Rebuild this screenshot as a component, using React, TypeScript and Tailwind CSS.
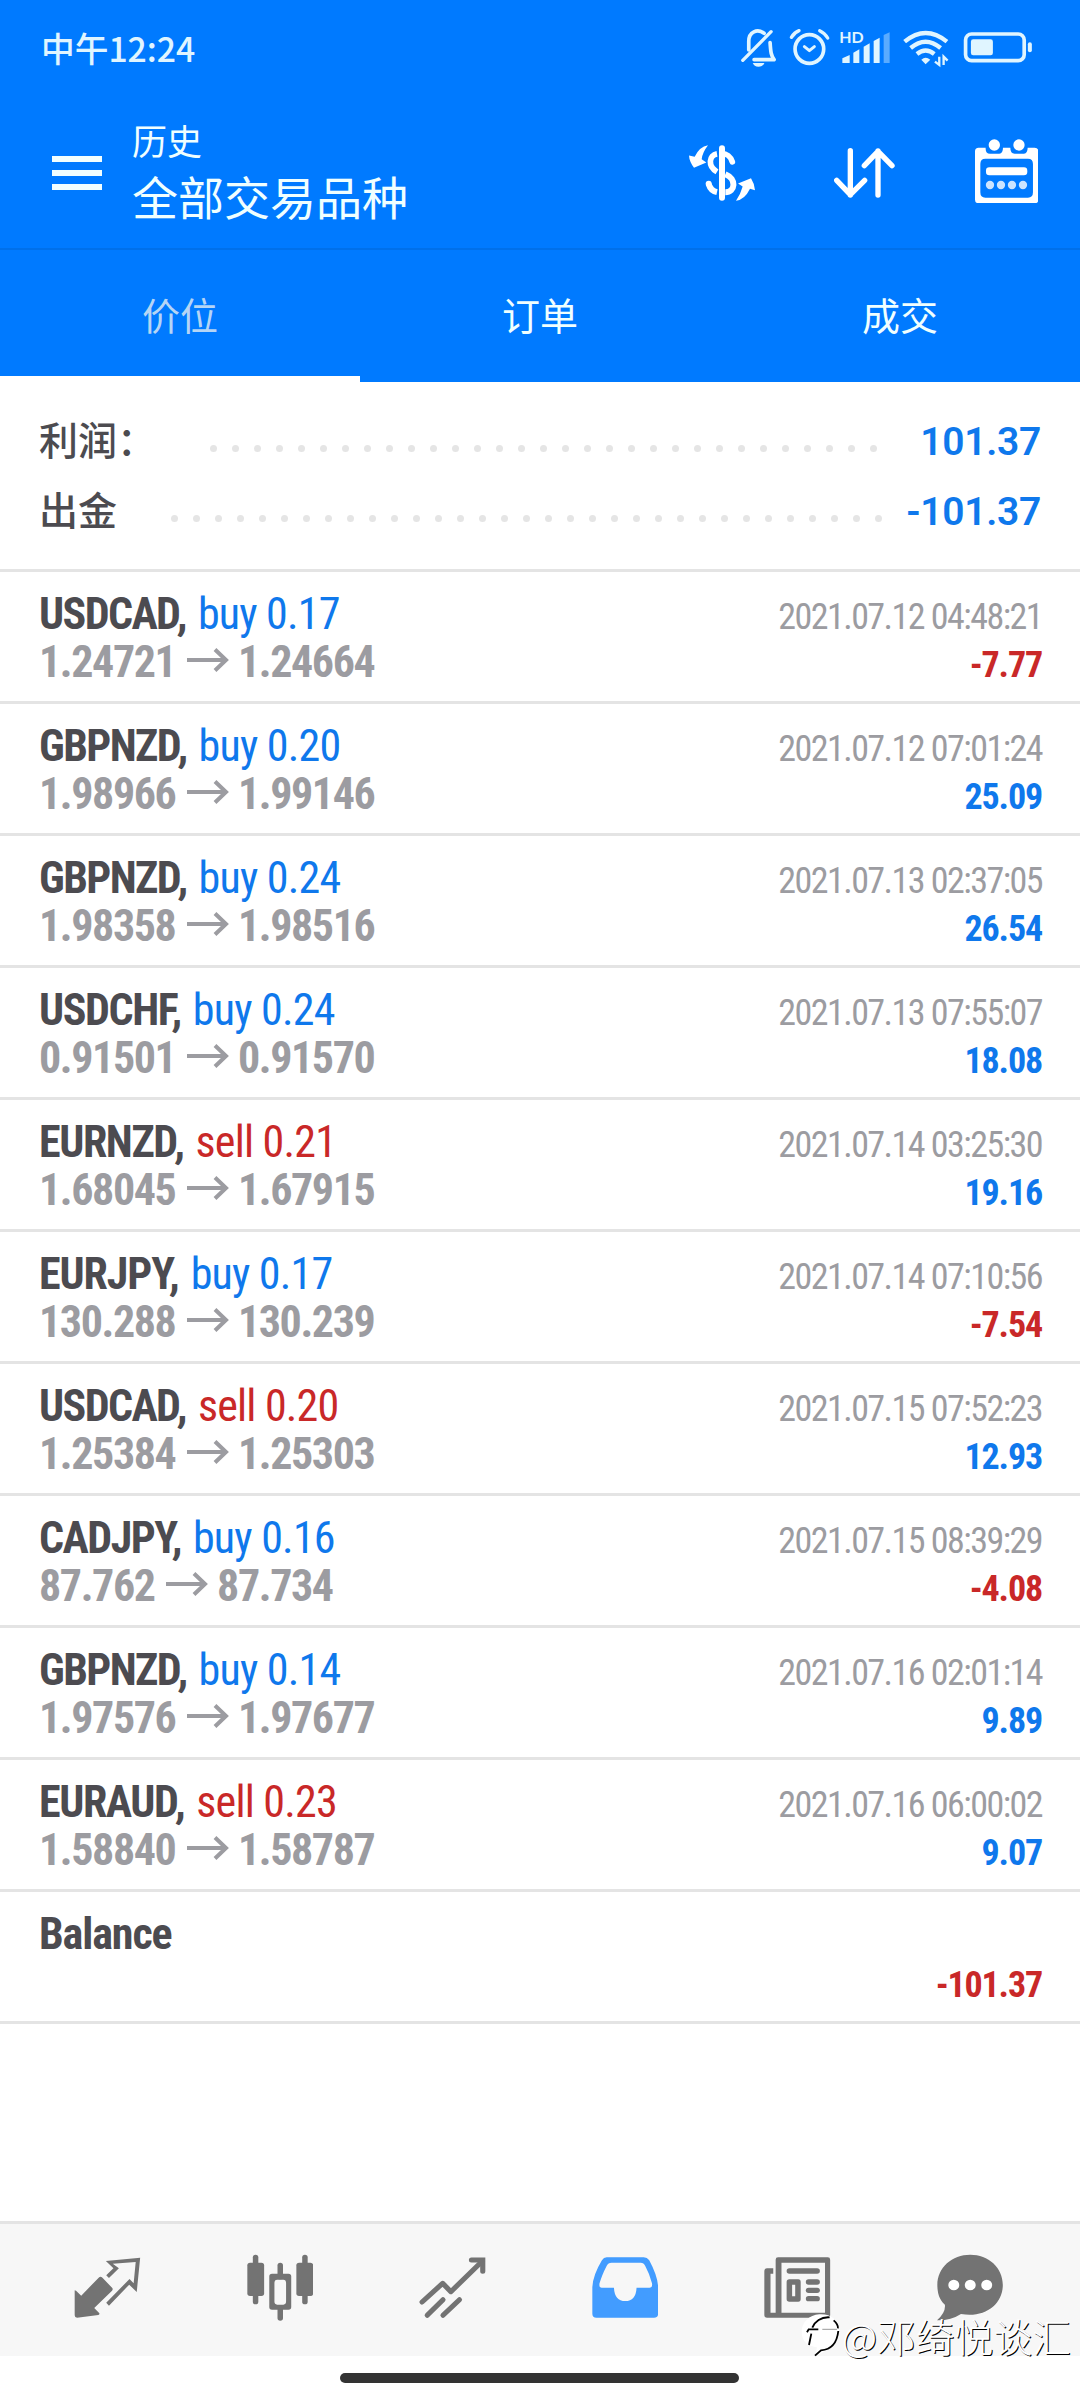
type Trade = {
  symbol: string;
  tracking: string;
  side: 'buy' | 'sell';
  lots: string;
  open: string;
  close: string;
  time: string;
  profit: string;
};

const trades: Trade[] = [
  { symbol: 'USDCAD', tracking: 'tracking-[-1.6px]', side: 'buy', lots: '0.17', open: '1.24721', close: '1.24664', time: '2021.07.12 04:48:21', profit: '-7.77' },
  { symbol: 'GBPNZD', tracking: 'tracking-[-1.6px]', side: 'buy', lots: '0.20', open: '1.98966', close: '1.99146', time: '2021.07.12 07:01:24', profit: '25.09' },
  { symbol: 'GBPNZD', tracking: 'tracking-[-1.6px]', side: 'buy', lots: '0.24', open: '1.98358', close: '1.98516', time: '2021.07.13 02:37:05', profit: '26.54' },
  { symbol: 'USDCHF', tracking: 'tracking-[-1.4px]', side: 'buy', lots: '0.24', open: '0.91501', close: '0.91570', time: '2021.07.13 07:55:07', profit: '18.08' },
  { symbol: 'EURNZD', tracking: 'tracking-[-1.4px]', side: 'sell', lots: '0.21', open: '1.68045', close: '1.67915', time: '2021.07.14 03:25:30', profit: '19.16' },
  { symbol: 'EURJPY', tracking: 'tracking-[-1.1px]', side: 'buy', lots: '0.17', open: '130.288', close: '130.239', time: '2021.07.14 07:10:56', profit: '-7.54' },
  { symbol: 'USDCAD', tracking: 'tracking-[-1.6px]', side: 'sell', lots: '0.20', open: '1.25384', close: '1.25303', time: '2021.07.15 07:52:23', profit: '12.93' },
  { symbol: 'CADJPY', tracking: 'tracking-[-1.5px]', side: 'buy', lots: '0.16', open: '87.762', close: '87.734', time: '2021.07.15 08:39:29', profit: '-4.08' },
  { symbol: 'GBPNZD', tracking: 'tracking-[-1.6px]', side: 'buy', lots: '0.14', open: '1.97576', close: '1.97677', time: '2021.07.16 02:01:14', profit: '9.89' },
  { symbol: 'EURAUD', tracking: 'tracking-[-1.4px]', side: 'sell', lots: '0.23', open: '1.58840', close: '1.58787', time: '2021.07.16 06:00:02', profit: '9.07' },
];

const CJK = "font-['Noto_Sans_CJK_SC',sans-serif]";

function StatusBar() {
  return (
    <div className="flex h-[96px] items-center justify-between pl-[41px] pr-[47px]">
      <span className="-mt-[1px] font-['Noto_Sans_CJK_SC',sans-serif] text-[33.7px] font-medium leading-none text-[#e0f5ff]">中午12:24</span>
      <svg viewBox="300 80 880 130" className="h-[43.3px] w-[293.3px] text-[#e0f5ff]" fill="none" stroke="currentColor" strokeLinecap="round" strokeLinejoin="round">
        {/* muted bell */}
        <path d="M372 102C352 87 326 97 326 126V152M390 130C392 160 393 168 402 181H342" strokeWidth="11" />
        <path d="M308 183L393 97" strokeWidth="10" />
        <path d="M338 191H373Q368 202 355 202T338 191Z" fill="currentColor" stroke="none" />
        {/* alarm clock */}
        <circle cx="508" cy="149" r="43" strokeWidth="11" />
        <path d="M493 142L508 154L523 142" strokeWidth="9" />
        <path d="M454 114Q463 99 477 94M539 94Q554 101 563 116" strokeWidth="10" />
        {/* signal */}
        <g fill="currentColor" stroke="none">
          <path d="M607 177L629 167V191H607ZM640 160L658 150V191H640ZM671 142L689 132V191H671ZM701 125L719 115V191H701Z" />
          <path d="M731 107L749 99V191H731Z" opacity="0.4" />
          <text x="598" y="131" fontSize="48" fontWeight="700" fontFamily="Lato, sans-serif" textLength="73">HD</text>
        </g>
        {/* wifi */}
        <path d="M794 127Q857 75 921 127M812 146Q857 108 902 146M831 164Q857 143 883 164" strokeWidth="13" strokeLinecap="butt" />
        <path d="M844 181Q857 169 871 181L857 195Z" fill="currentColor" stroke="none" />
        <path d="M898 172V197L885 187M911 197V172L923 184" strokeWidth="7" strokeLinecap="butt" strokeLinejoin="miter" />
        {/* battery */}
        <rect x="977" y="104" width="176" height="80" rx="18" strokeWidth="11" />
        <rect x="993" y="120" width="66" height="48" rx="7" fill="currentColor" stroke="none" />
        <rect x="1164" y="129" width="12" height="30" rx="6" fill="currentColor" stroke="none" />
      </svg>
    </div>
  );
}

function Header() {
  return (
    <header className="flex h-[152px] items-start">
      <button className="ml-[52px] mt-[60px] flex w-[50px] flex-col gap-2" aria-label="menu">
        <span className="h-[6px] bg-[#f2ffff]" />
        <span className="h-[6px] bg-[#f2ffff]" />
        <span className="h-[6px] bg-[#f2ffff]" />
      </button>
      <div className={`ml-[30px] mt-[19px] flex-1 text-[#f0ffff] ${CJK}`}>
        <div className="text-[35px] leading-[50px]">历史</div>
        <div className="text-[46px] leading-[60px]">全部交易品种</div>
      </div>
      <div className="mr-[2px] flex h-[152px] text-white">
        <div className="flex w-[142.5px] justify-center pt-[49px]">
          <svg viewBox="147 436 198 167" className="h-[56px] w-[66px]" fill="none" stroke="currentColor" strokeLinecap="round">
            <path d="M246 445V594" strokeWidth="18" />
            <path d="M277 486C272 470 259 461 246 461" strokeWidth="17" />
            <path d="M231 462C207 466 202 499 231 516" strokeWidth="17" strokeLinecap="butt" />
            <path d="M256 523C291 537 286 577 256 577" strokeWidth="18" strokeLinecap="butt" />
            <path d="M206 553Q212 573 231 577" strokeWidth="18" strokeLinecap="butt" />
            <circle cx="206" cy="552" r="9" fill="currentColor" stroke="none" />
            <path d="M204 436Q178 440 164 471L147 467Q148 485 162 504L199 488L185 478Q187 458 204 436Z" fill="currentColor" stroke="none" />
            <path d="M288 603Q314 600 330 567L345 571Q343 550 333 535L294 551L308 560Q302 582 288 603Z" fill="currentColor" stroke="none" />
          </svg>
        </div>
        <div className="flex w-[142.5px] justify-center pt-[52px]">
          <svg viewBox="584 444 183 150" className="h-[50px] w-[61px]" fill="none" stroke="currentColor" strokeWidth="16" strokeLinecap="round" strokeLinejoin="round">
            <path d="M633 452V585M592 541L633 584L676 541" />
            <path d="M716 585V453M675 497L716 454L758 497" />
          </svg>
        </div>
        <div className="flex w-[142.5px] justify-center pt-[43px]">
          <svg viewBox="1005 418 190 193" className="h-[64.3px] w-[63.3px]">
            <path fillRule="evenodd" fill="currentColor" d="M1016 444H1037Q1036 462 1050 462H1078Q1089 461 1089 444H1111Q1111 462 1124 462H1152Q1163 461 1163 444H1184Q1195 444 1195 455V600Q1195 611 1184 611H1016Q1005 611 1005 600V455Q1005 444 1016 444ZM1036 477Q1021 477 1021 493V578Q1021 594 1036 594H1164Q1179 594 1179 578V493Q1179 477 1164 477Z" />
            <g fill="currentColor">
              <circle cx="1063" cy="436" r="17" />
              <circle cx="1137" cy="436" r="17" />
              <rect x="1038" y="503" width="124" height="24" rx="10" />
              <g opacity="0.8">
                <circle cx="1050" cy="556" r="12.5" />
                <circle cx="1083" cy="556" r="12.5" />
                <circle cx="1116" cy="556" r="12.5" />
                <circle cx="1149" cy="556" r="12.5" />
              </g>
            </g>
          </svg>
        </div>
      </div>
    </header>
  );
}

function Tabs() {
  return (
    <nav className={`grid h-[134px] grid-cols-3 border-t-2 border-[#0070ea] text-[38px] text-[#f0ffff] ${CJK}`}>
      <div className="flex items-center justify-center border-b-[6px] border-white text-[#b5d5f5]">价位</div>
      <div className="flex items-center justify-center border-b-[6px] border-[#007aff]">订单</div>
      <div className="flex items-center justify-center border-b-[6px] border-[#007aff]">成交</div>
    </nav>
  );
}

function SummaryRow({ label, value, dots, dotEnd }: { label: string; value: string; dots: number; dotEnd: string }) {
  return (
    <div className="flex h-[70px] items-center">
      <span className={`-mt-[9px] text-[39px] font-medium leading-[70px] text-[#4c4b50] ${CJK}`}>{label}</span>
      <div className={`mt-[13px] flex flex-1 justify-end gap-[15px] ${dotEnd}`}>
        {Array.from({ length: dots }, (_, i) => (
          <span key={i} className="size-[7px] rounded-full bg-[#e5e5e5]" />
        ))}
      </div>
      <span className="w-[164px] text-right font-[Roboto,sans-serif] text-[39px] font-semibold leading-[70px] tracking-[-0.3px] text-[#0f78ec]">{value}</span>
    </div>
  );
}

function TradeRow({ t }: { t: Trade }) {
  return (
    <li className="h-[132px] border-b-[3px] border-[#e4e4e4] pl-[39px] pr-[38px] pt-[18px] font-['Roboto_Condensed',sans-serif]">
      <div className="flex h-[48px] items-baseline leading-[48px]">
        <span className={`text-[44px] font-bold text-[#4c4b50] ${t.tracking}`}>{t.symbol},</span>
        <span className={`ml-[12px] flex-1 text-[44px] tracking-[-0.8px] ${t.side === 'buy' ? 'text-[#0f78ec]' : 'text-[#c92828]'}`}>
          {t.side} {t.lots}
        </span>
        <span className="text-[36px] tracking-[-1.53px] text-[#9c9ca1]">{t.time}</span>
      </div>
      <div className="flex h-[48px] items-baseline leading-[48px] text-[#9c9ca1]">
        <span className="text-[44px] font-bold tracking-[-1.4px]">{t.open}</span>
        <svg viewBox="0 0 42 24" className="mb-[5px] ml-[11.5px] mr-[9px] h-[24px] w-[42px] self-center" fill="none" stroke="currentColor" strokeWidth="4">
          <path d="M0 12H39M28 1.5L39 12L28 22.5" />
        </svg>
        <span className="flex-1 text-[44px] font-bold tracking-[-1.4px]">{t.close}</span>
        <span className={`text-[36px] font-bold tracking-[-1.15px] ${t.profit.startsWith('-') ? 'text-[#c92828]' : 'text-[#0f78ec]'}`}>{t.profit}</span>
      </div>
    </li>
  );
}

function BottomNav() {
  const cls = 'h-[70px] w-[66.5px]';
  return (
    <nav className="flex h-[135px] items-start border-t-[3px] border-[#e4e4e4] bg-[#f7f7f7] pl-[21px] pr-[24px] pt-[29px] text-[#737373]">
      <div className="flex flex-1 justify-center">
        <svg viewBox="216 160 194 210" preserveAspectRatio="none" className={cls} fill="currentColor">
          <path d="M218 272L222 273L237 288L288 234Q293 228 299 234L327 264Q331 268 327 273L275 325L290 341Q291 344 287 346L225 354Q218 354 218 347Z" />
          <path d="M309 184L409 174L399 277L377 255L318 318L310 309L378 238L390 251L396 187L329 192L347 206L318 235L310 227L331 206Z" />
        </svg>
      </div>
      <div className="flex flex-1 justify-center">
        <svg viewBox="716 160 194 210" preserveAspectRatio="none" className={cls} fill="currentColor">
          <rect x="733" y="165" width="16" height="149" rx="8" />
          <rect x="717" y="189" width="49" height="100" rx="8" />
          <rect x="877" y="165" width="16" height="149" rx="8" />
          <rect x="860" y="189" width="49" height="100" rx="8" />
          <rect x="805" y="189" width="16" height="50" rx="8" />
          <rect x="805" y="320" width="16" height="43" rx="8" />
          <path fillRule="evenodd" d="M789 222H837Q845 222 845 230V322Q845 330 837 330H789Q781 330 781 322V230Q781 222 789 222ZM804 240Q796 240 796 250V305Q796 315 804 315H822Q830 315 830 305V250Q830 240 822 240Z" />
        </svg>
      </div>
      <div className="flex flex-1 justify-center">
        <svg viewBox="1215 160 194 210" preserveAspectRatio="none" className={cls} fill="none" stroke="currentColor" strokeWidth="15" strokeLinecap="round">
          <path d="M1224 307L1284 251L1308 276L1400 184" strokeLinejoin="round" />
          <path d="M1368 181H1401V215" />
          <path d="M1239 347L1285 300M1285 347L1333 300" />
        </svg>
      </div>
      <div className="flex flex-1 justify-center text-[#429cff]">
        <svg viewBox="150 160 194 210" preserveAspectRatio="none" className={cls} fill="currentColor">
          <path fillRule="evenodd" d="M193 173H301Q311 173 317 182Q341 228 343 262V342Q343 354 331 354H163Q151 354 151 342V262Q153 226 179 182Q184 173 193 173ZM207 189Q197 189 193 198Q178 228 172 251Q170 264 178 264H214Q216 304 247 304Q278 304 280 264H318Q327 264 325 251Q317 220 305 198Q301 189 292 189Z" />
        </svg>
      </div>
      <div className="flex flex-1 justify-center">
        <svg viewBox="652 160 194 210" preserveAspectRatio="none" className={cls} fill="currentColor">
          <path fillRule="evenodd" d="M693 173H838Q845 173 845 180V347Q845 354 838 354H661Q653 354 653 346V215Q653 206 661 206H679V222H671V339H686V180Q686 173 693 173ZM703 189V339H830V189Z" />
          <rect x="718" y="206" width="97" height="16" rx="8" />
          <path fillRule="evenodd" d="M726 239H752Q759 239 759 247V298Q759 306 752 306H726Q718 306 718 298V247Q718 239 726 239ZM734 255V290H743V255Z" />
          <rect x="774" y="239" width="41" height="16" rx="8" />
          <rect x="774" y="264" width="41" height="16" rx="8" />
          <rect x="774" y="289" width="41" height="16" rx="8" />
        </svg>
      </div>
      <div className="flex flex-1 justify-center">
        <svg viewBox="1155 160 194 210" preserveAspectRatio="none" className={cls} fill="currentColor">
          <path d="M1252 165C1305 165 1347 203 1347 256C1347 315 1293 356 1225 343Q1195 363 1155 362Q1181 338 1178 315C1160 300 1156 275 1156 256C1156 203 1199 165 1252 165Z" />
          <g fill="#fff">
            <circle cx="1204" cy="256" r="16" />
            <circle cx="1252" cy="256" r="16" />
            <circle cx="1300" cy="256" r="16" />
          </g>
        </svg>
      </div>
    </nav>
  );
}

function Watermark() {
  return (
    <div className={`absolute right-[9px] top-[2310px] flex items-center whitespace-nowrap text-[38.8px] font-light leading-[50px] text-white [text-shadow:1px_1px_0_#000] ${CJK}`}>
      <svg viewBox="70 60 118 130" className="mr-[1px] h-[43.3px] w-[39.3px]" fill="none">
        <path d="M125 64C95 66 72 88 72 117C72 146 92 160 118 163L112 188Q185 165 184 112C182 80 160 62 125 64Z" fill="#fff" />
        <path d="M94 156L101 122M88 118L93 109H122M104 104C111 86 130 71 156 73M168 82Q182 94 181 106M182 114C178 152 158 170 130 172L112 188" stroke="#000" strokeWidth="5.5" />
        <path d="M134 109H178" stroke="#999" strokeWidth="3" />
      </svg>
      <span>@邓绮悦谈汇</span>
    </div>
  );
}

export default function App() {
  return (
    <div className="relative flex h-[2400px] w-[1080px] flex-col overflow-hidden bg-white">
      <div className="bg-[#007aff]">
        <StatusBar />
        <Header />
        <Tabs />
      </div>
      <section className="h-[190px] border-b-[3px] border-[#e4e4e4] pl-[39px] pr-[39px] pt-[25px]">
        <SummaryRow label="利润：" value="101.37" dots={31} dotEnd="" />
        <SummaryRow label="出金" value="-101.37" dots={33} dotEnd="mr-[-5px]" />
      </section>
      <ul className="flex-1">
        {trades.map((t, i) => (
          <TradeRow key={i} t={t} />
        ))}
        <li className="h-[132px] border-b-[3px] border-[#e4e4e4] pl-[39px] pr-[38px] pt-[18px] font-['Roboto_Condensed',sans-serif]">
          <div className="h-[48px] text-[44px] font-bold leading-[48px] tracking-[-1.1px] text-[#4c4b50]">Balance</div>
          <div className="pt-[3px] text-right text-[36px] font-bold leading-[48px] tracking-[-1.15px] text-[#c92828]">-101.37</div>
        </li>
      </ul>
      <BottomNav />
      <div className="flex h-[44px] pl-[340px] pt-[17px]">
        <div className="h-[10px] w-[399px] rounded-full bg-[#333]" />
      </div>
      <Watermark />
    </div>
  );
}
